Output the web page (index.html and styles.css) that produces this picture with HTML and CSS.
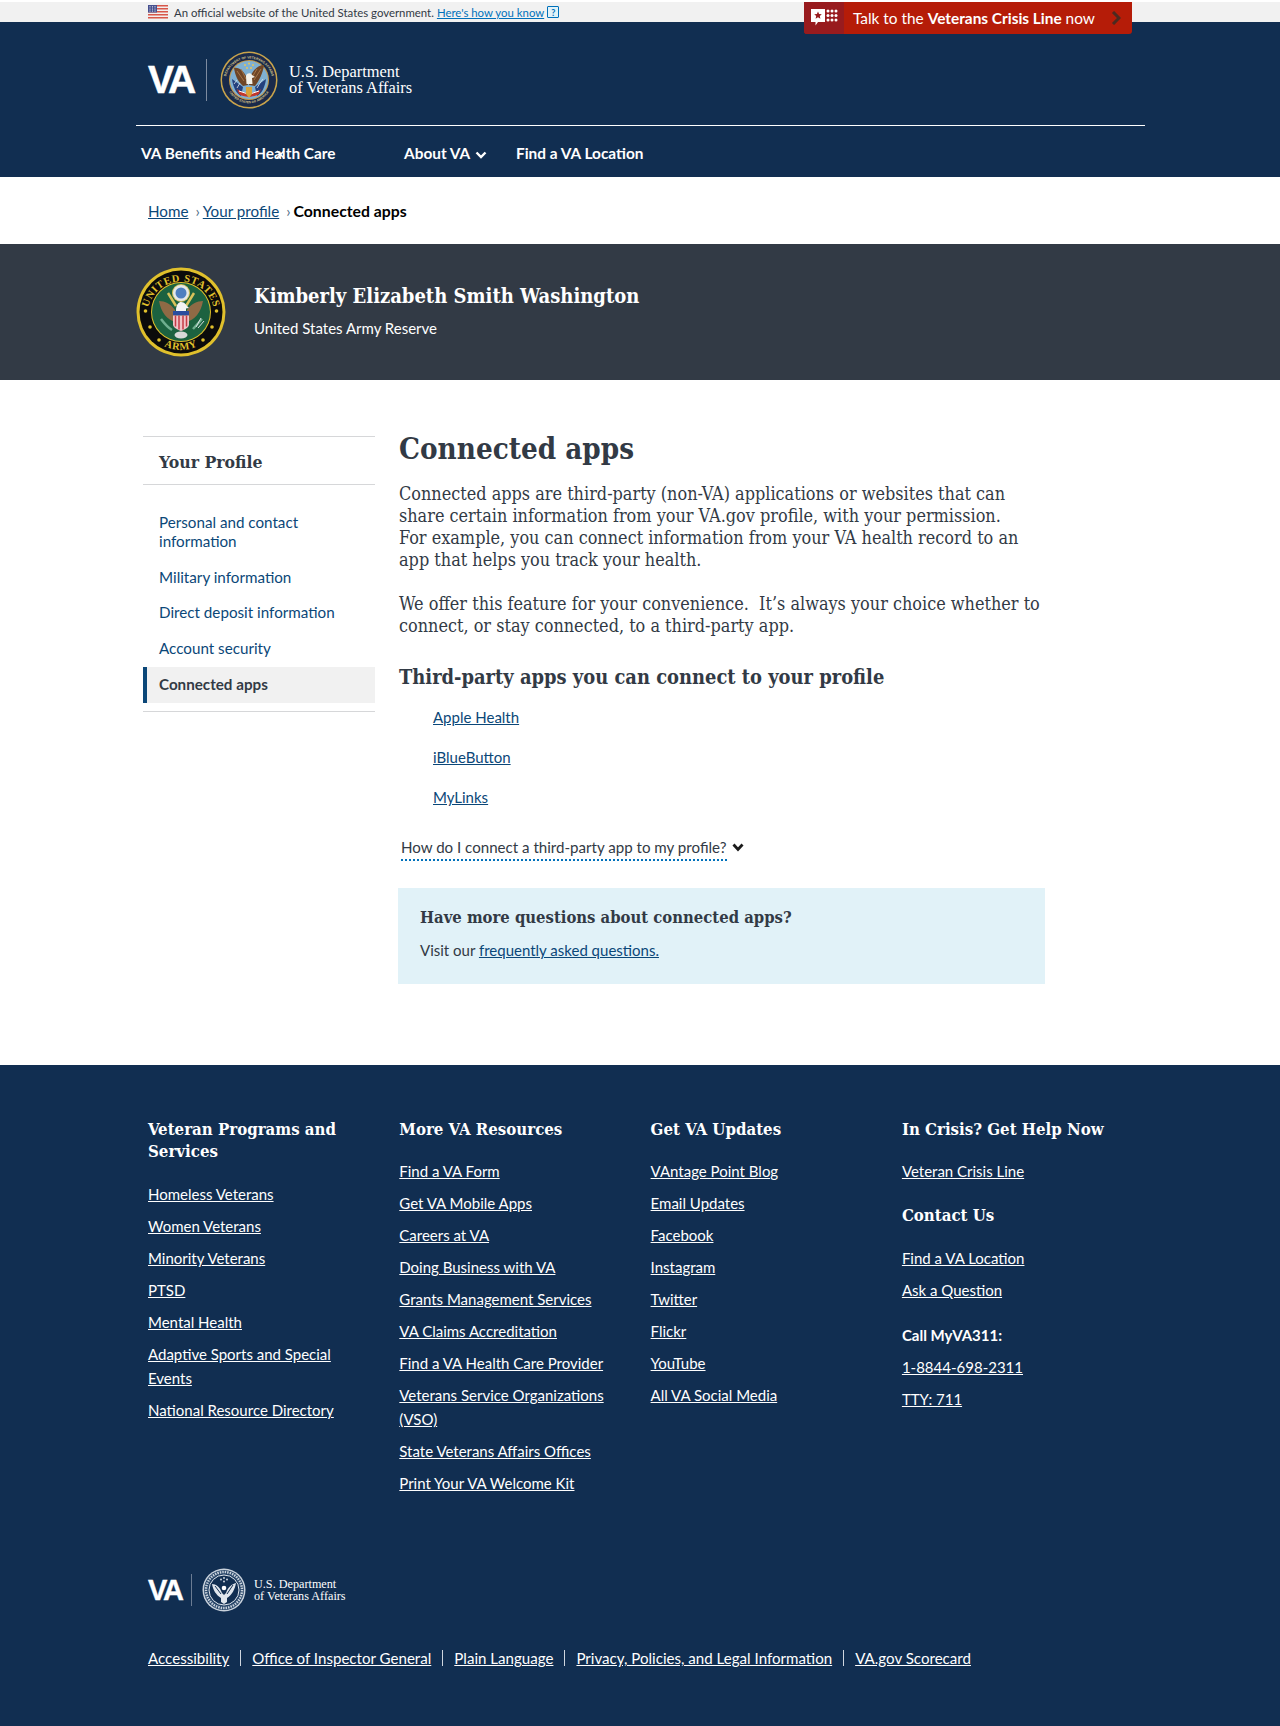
FILE: index.html
```html
<!DOCTYPE html>
<html lang="en">
<head>
<meta charset="utf-8">
<title>Connected apps | Veterans Affairs</title>
<link rel="stylesheet" href="styles.css">
</head>
<body>
<div class="official">
  <div class="official-inner">
    <svg class="flag" width="20" height="14" viewBox="0 0 20 14"><rect width="20" height="14" fill="#f3eeee"/><g fill="#d8574a"><rect y="0" width="20" height="1.5"/><rect y="3" width="20" height="1.5"/><rect y="6" width="20" height="1.5"/><rect y="9" width="20" height="1.5"/><rect y="12" width="20" height="1.5"/></g><rect width="9" height="7.5" fill="#46508f"/><g fill="#fff"><circle cx="2" cy="1.8" r=".6"/><circle cx="4.5" cy="1.8" r=".6"/><circle cx="7" cy="1.8" r=".6"/><circle cx="2" cy="4" r=".6"/><circle cx="4.5" cy="4" r=".6"/><circle cx="7" cy="4" r=".6"/><circle cx="2" cy="6" r=".6"/><circle cx="4.5" cy="6" r=".6"/><circle cx="7" cy="6" r=".6"/></g></svg>
    <span class="official-text">An official website of the United States government.</span>
    <a class="official-link" href="#">Here's how you know</a>
    <span class="q-box">?</span>
  </div>
</div>

<a class="crisis" href="#">
  <span class="crisis-icon">
    <svg width="28" height="20" viewBox="0 0 28 20"><path d="M1 1h14v13H8l-2.500 3.500V14H1z" fill="#fff"/><path d="M8 3.500l1.100 2.500 2.700.2-2 1.800.6 2.700L8 9.300l-2.400 1.400.6-2.700-2-1.800 2.700-.2z" fill="#981b1e"/><g fill="#fff"><circle cx="18" cy="3" r="1.500"/><circle cx="22" cy="3" r="1.500"/><circle cx="26" cy="3" r="1.500"/><circle cx="18" cy="7.500" r="1.500"/><circle cx="22" cy="7.500" r="1.500"/><circle cx="26" cy="7.500" r="1.500"/><circle cx="18" cy="12" r="1.500"/><circle cx="22" cy="12" r="1.500"/><circle cx="26" cy="12" r="1.500"/></g></svg>
  </span>
  <span class="crisis-text">Talk to the <b>Veterans Crisis Line</b> now</span>
  <svg class="crisis-arrow" width="10" height="14" viewBox="0 0 10 14"><path d="M2 1l6 6-6 6" fill="none" stroke="#4b2a20" stroke-width="3"/></svg>
</a>

<header class="site-header">
  <div class="wrap">
    <div class="brand">
      <span class="va-mark">VA</span>
      <span class="brand-rule"></span>
      <svg class="seal" width="58" height="58" viewBox="0 0 58 58">
        <circle cx="29" cy="29" r="28.500" fill="#c9a44c"/>
        <circle cx="29" cy="29" r="27" fill="#1a2a4a"/>
        <circle cx="29" cy="29" r="20" fill="#c69a4a"/>
        <circle cx="29" cy="29" r="19" fill="#7fb0d2"/>
        <defs>
          <path id="vaTop" d="M5.500 31a23.500 23.500 0 0 1 47 0"/>
          <path id="vaBot" d="M7 36a23 23 0 0 0 44 0"/>
        </defs>
        <g class="seal-tiny" fill="#d8c48a">
          <text><textPath href="#vaTop" startOffset="50%" text-anchor="middle">DEPARTMENT OF VETERANS AFFAIRS</textPath></text>
          <text><textPath href="#vaBot" startOffset="50%" text-anchor="middle">UNITED STATES OF AMERICA</textPath></text>
        </g>
        <path d="M12 28l11 8-2 9c-5-3-8-9-9-17zM46 28l-11 8 2 9c5-3 8-9 9-17z" fill="#24407c"/>
        <path d="M14 33l3-4M17 37l3-5M40 32l3-4M37 37l3-5" stroke="#dfe6ee" stroke-width=".8"/>
        <path d="M14 17c5-1 10 3 13 10l1 7-5 1C18 31 15 24 14 17zM44 14c-5 0-11 4-14 13l-1 7 6 1c4-5 8-13 9-21z" fill="#6e4526"/>
        <path d="M17 20l7 10M21 18l5 10M41 18l-7 11M37 18l-6 10" stroke="#a97b4c" stroke-width=".9"/>
        <path d="M26 25c0-3 5-4 6-1l3 2-3 1 .5 6h-6z" fill="#f4f1e8"/>
        <path d="M17 38c5 3 8 4 12 4s8-1 12-4l-2 5c-3 2-6 2-10 3-4-1-8-1-10-3z" fill="#c2382d"/>
        <path d="M19 40l9 3M39 40l-9 3" stroke="#fff" stroke-width="1"/>
        <path d="M26 36h6v7l-3 4-3-4z" fill="#d8a33a"/>
        <g fill="#e6c45a"><circle cx="25" cy="14" r="1"/><circle cx="29" cy="12.500" r="1"/><circle cx="33" cy="14" r="1"/><circle cx="27" cy="17" r="1"/><circle cx="31" cy="17" r="1"/></g>
      </svg>
      <span class="brand-name">U.S. Department<br>of Veterans Affairs</span>
    </div>
    <nav class="main-nav">
      <a href="#" class="nav-benefits">VA Benefits and Health Care</a>
      <a href="#" class="nav-about">About VA
        <svg width="12" height="8" viewBox="0 0 12 8"><path d="M1.500 1.500L6 6l4.500-4.500" fill="none" stroke="#fff" stroke-width="2.400"/></svg>
      </a>
      <a href="#" class="nav-find">Find a VA Location</a>
      <svg class="nav-cursor" width="9" height="9" viewBox="0 0 9 9"><path d="M1 1l7 7M8 1L1 8" stroke="#fff" stroke-width="1.600"/></svg>
    </nav>
  </div>
</header>

<div class="crumbs">
  <a href="#">Home</a><span class="sep">›</span><a href="#">Your profile</a><span class="sep">›</span><b>Connected apps</b>
</div>

<section class="hero">
  <svg class="army" width="90" height="90" viewBox="0 0 90 90">
    <circle cx="45" cy="45" r="44.500" fill="#e0c02c"/>
    <circle cx="45" cy="45" r="41.500" fill="#0b0b0b"/>
    <circle cx="45" cy="45" r="30" fill="#e0c02c"/>
    <circle cx="45" cy="45" r="29" fill="#1c6240"/>
    <defs>
      <path id="armyTop" d="M11.500 48a33.500 33.500 0 0 1 67 0"/>
      <path id="armyBot" d="M12 63.800a38 38 0 0 0 66 0"/>
    </defs>
    <g class="army-letters" fill="#e0c02c">
      <text><textPath href="#armyTop" startOffset="50%" text-anchor="middle">UNITED STATES</textPath></text>
      <text><textPath href="#armyBot" startOffset="50%" text-anchor="middle">ARMY</textPath></text>
    </g>
    <path d="M23 34c6 0 12 3 16 9l1 12c-9-2-15-10-17-21zM67 34c-6 0-12 3-16 9l-1 12c9-2 15-10 17-21z" fill="#8f6a45"/>
    <path d="M32 26l8 13M58 26l-8 13" stroke="#d8c25a" stroke-width="2.500"/>
    <circle cx="45" cy="26" r="9" fill="#d8c25a"/>
    <circle cx="45" cy="26" r="8" fill="#e4e8ea"/>
    <circle cx="45" cy="26" r="5.500" fill="#4f7fc0"/>
    <path d="M40 44c0-7 3-9 5-9 4 0 5 3 6 4l2 2-3 .500v3z" fill="#f4f4f4"/>
    <rect x="37" y="44" width="16" height="4.500" fill="#2b4d9e"/>
    <path d="M37 48.500h16v9c0 3-4 5-8 6.500-4-1.500-8-3.500-8-6.500z" fill="#f0c4c8"/>
    <g stroke="#c53b46" stroke-width="1.500"><path d="M39.500 48.500v11M43 48.500v14M47 48.500v14M50.500 48.500v11"/></g>
    <ellipse cx="45" cy="68" rx="6.500" ry="3.500" fill="#d9d9d9"/>
    <path d="M25 52c3 4 6 8 11 11M57 62l9-10" stroke="#6fae8f" stroke-width="2.500" fill="none"/>
    <path d="M60 60l5-9M62 61l6-7" stroke="#d6dde0" stroke-width="1"/>
    <g fill="#e0c02c"><circle cx="9.500" cy="44" r="1.800"/><circle cx="80.500" cy="44" r="1.800"/><circle cx="14" cy="60" r="1.800"/><circle cx="76" cy="60" r="1.800"/><circle cx="23" cy="73" r="1.800"/><circle cx="67" cy="73" r="1.800"/></g>
  </svg>
  <div class="hero-text">
    <h1 class="hero-name">Kimberly Elizabeth Smith Washington</h1>
    <p class="hero-branch">United States Army Reserve</p>
  </div>
</section>

<main class="page">
  <aside class="side">
    <h2 class="side-title">Your Profile</h2>
    <ul class="side-list">
      <li><a href="#">Personal and contact information</a></li>
      <li><a href="#">Military information</a></li>
      <li><a href="#">Direct deposit information</a></li>
      <li><a href="#">Account security</a></li>
      <li class="active"><a href="#">Connected apps</a></li>
    </ul>
  </aside>
  <article class="content">
    <h1 class="page-title">Connected apps</h1>
    <p class="lead lead-narrow">Connected apps are third-party (non-VA) applications or websites that can share certain information from your VA.gov profile, with your permission. For example, you can connect information from your VA health record to an app that helps you track your health.</p>
    <p class="lead">We offer this feature for your convenience.&nbsp; It’s always your choice whether to connect, or stay connected, to a third-party app.</p>
    <h2 class="sub-title">Third-party apps you can connect to your profile</h2>
    <ul class="app-list">
      <li><a href="#">Apple Health</a></li>
      <li><a href="#">iBlueButton</a></li>
      <li><a href="#">MyLinks</a></li>
    </ul>
    <div class="howto">
      <span class="howto-text">How do I connect a third-party app to my profile?</span>
      <svg width="12" height="9" viewBox="0 0 12 9"><path d="M1.500 1.500L6 6.500l4.500-5" fill="none" stroke="#1b1b1b" stroke-width="2.800"/></svg>
    </div>
    <div class="faq">
      <h3 class="faq-title">Have more questions about connected apps?</h3>
      <p class="faq-text">Visit our <a href="#">frequently asked questions.</a></p>
    </div>
  </article>
</main>

<footer class="footer">
  <div class="foot-cols">
    <div class="foot-col">
      <h3>Veteran Programs and Services</h3>
      <ul>
        <li><a href="#">Homeless Veterans</a></li>
        <li><a href="#">Women Veterans</a></li>
        <li><a href="#">Minority Veterans</a></li>
        <li><a href="#">PTSD</a></li>
        <li><a href="#">Mental Health</a></li>
        <li><a href="#">Adaptive Sports and Special Events</a></li>
        <li><a href="#">National Resource Directory</a></li>
      </ul>
    </div>
    <div class="foot-col">
      <h3>More VA Resources</h3>
      <ul>
        <li><a href="#">Find a VA Form</a></li>
        <li><a href="#">Get VA Mobile Apps</a></li>
        <li><a href="#">Careers at VA</a></li>
        <li><a href="#">Doing Business with VA</a></li>
        <li><a href="#">Grants Management Services</a></li>
        <li><a href="#">VA Claims Accreditation</a></li>
        <li><a href="#">Find a VA Health Care Provider</a></li>
        <li><a href="#">Veterans Service Organizations (VSO)</a></li>
        <li><a href="#">State Veterans Affairs Offices</a></li>
        <li><a href="#">Print Your VA Welcome Kit</a></li>
      </ul>
    </div>
    <div class="foot-col">
      <h3>Get VA Updates</h3>
      <ul>
        <li><a href="#">VAntage Point Blog</a></li>
        <li><a href="#">Email Updates</a></li>
        <li><a href="#">Facebook</a></li>
        <li><a href="#">Instagram</a></li>
        <li><a href="#">Twitter</a></li>
        <li><a href="#">Flickr</a></li>
        <li><a href="#">YouTube</a></li>
        <li><a href="#">All VA Social Media</a></li>
      </ul>
    </div>
    <div class="foot-col">
      <h3>In Crisis? Get Help Now</h3>
      <ul>
        <li><a href="#">Veteran Crisis Line</a></li>
      </ul>
      <h3 class="contact-head">Contact Us</h3>
      <ul>
        <li><a href="#">Find a VA Location</a></li>
        <li><a href="#">Ask a Question</a></li>
      </ul>
      <p class="call-head">Call MyVA311:</p>
      <ul>
        <li><a href="#">1-8844-698-2311</a></li>
        <li><a href="#">TTY: 711</a></li>
      </ul>
    </div>
  </div>
  <div class="foot-brand">
    <span class="va-mark small">VA</span>
    <span class="brand-rule small"></span>
    <svg class="seal-small" width="44" height="44" viewBox="0 0 44 44">
      <circle cx="22" cy="22" r="21.500" fill="#c9d2dc"/>
      <circle cx="22" cy="22" r="20" fill="#274568"/>
      <circle cx="22" cy="22" r="15" fill="#112e51" stroke="#dfe5ec" stroke-width="1"/>
      <circle cx="22" cy="22" r="18" fill="none" stroke="#c9d2dc" stroke-width="2.500" stroke-dasharray="1.500 1"/>
      <path d="M10 16c4 0 8 3 10 9l2 2 2-2c2-6 6-9 10-10-1 6-4 12-9 15v4l-3 2-3-2v-4c-5-3-8-8-9-14z" fill="#dfe5ec"/>
      <path d="M13 18l6 8M16 16l5 8M31 17l-6 9M28 15l-5 9" stroke="#112e51" stroke-width="1"/>
      <circle cx="22" cy="20" r="2.300" fill="#fff"/>
      <g fill="#dfe5ec"><circle cx="19" cy="11.500" r=".9"/><circle cx="22" cy="10" r=".9"/><circle cx="25" cy="11.500" r=".9"/><circle cx="22" cy="13.500" r=".9"/></g>
    </svg>
    <span class="brand-name small">U.S. Department<br>of Veterans Affairs</span>
  </div>
  <nav class="foot-links">
    <a href="#">Accessibility</a><span class="pipe"></span><a href="#">Office of Inspector General</a><span class="pipe"></span><a href="#">Plain Language</a><span class="pipe"></span><a href="#">Privacy, Policies, and Legal Information</a><span class="pipe"></span><a href="#">VA.gov Scorecard</a>
  </nav>
</footer>
</body>
</html>
```
FILE: styles.css
```css
* { box-sizing: border-box; }
html, body { margin: 0; padding: 0; }
body {
  position: relative;
  padding-top: 2px;
  background: #fff;
  color: #323a45;
  font-family: "Lato", "Liberation Sans", sans-serif;
  font-size: 16px;
}
h1, h2, h3, p, ul { margin: 0; padding: 0; }
ul { list-style: none; }

/* government strip */
.official { height: 20px; background: #f1f1f1; }
.official-inner { display: flex; align-items: center; height: 20px; padding-left: 148px; font-size: 11.400px; }
.flag { margin-right: 6px; }
.official-text { color: #323a45; margin-right: 3px; }
.official-link { color: #0071bb; }
.q-box { display: inline-flex; align-items: center; justify-content: center; width: 12px; height: 12px; margin-left: 3px; border: 1px solid #0071bb; border-radius: 1px; background: #e1f2f8; color: #0071bb; font-size: 9px; font-weight: 700; }

/* crisis */
.crisis { position: absolute; left: 804px; top: 2px; display: flex; align-items: center; width: 328px; height: 32px; background: #b51c08; border-radius: 0 0 3px 3px; color: #fff; text-decoration: none; }
.crisis-icon { display: flex; align-items: center; justify-content: center; width: 40px; height: 32px; background: #981b1e; flex: none; border-radius: 0 0 0 3px; }
.crisis-text { margin-left: 9px; font-size: 15.400px; white-space: nowrap; flex: 1; }
.crisis-arrow { margin-right: 11px; }

/* header */
.site-header { background: #112e51; height: 155px; }
.wrap { width: 1009px; margin-left: 136px; }
.brand { display: flex; align-items: center; height: 104px; padding: 12px 0 0 12px; border-bottom: 1px solid #fff; color: #fff; }
.va-mark { font-family: "Liberation Sans", sans-serif; font-weight: 700; font-size: 39px; letter-spacing: -3px; line-height: 1; width: 58px; color: #fff; flex: none; -webkit-text-stroke: .5px #fff; }
.brand-rule { width: 1px; height: 42px; margin: 0 13px 0 0; background: #7d8ba0; flex: none; }
.seal { flex: none; }
.seal-tiny { font-family: "Liberation Sans", sans-serif; font-size: 3.300px; font-weight: 700; }
.brand-name { margin-left: 11px; font-family: "Liberation Serif", serif; font-size: 16.400px; line-height: 16px; color: #fff; white-space: nowrap; }
.main-nav { position: relative; display: flex; align-items: center; height: 50px; padding: 3px 0 0 5px; }
.main-nav a { color: #fff; font-weight: 700; font-size: 15.400px; text-decoration: none; white-space: nowrap; }
.nav-benefits { width: 263px; }
.nav-about { width: 112px; }
.nav-about svg { margin-left: 1px; }
.nav-cursor { position: absolute; left: 140px; top: 24px; }

/* breadcrumb */
.crumbs { height: 67px; padding: 24px 0 0 148px; font-size: 15.200px; line-height: 20px; color: #000; }
.crumbs a { color: #0b4778; }
.crumbs b { font-size: 15.800px; }
.sep { margin: 0 3px 0 7px; color: #4f6b86; }

/* hero */
.hero { display: flex; align-items: center; height: 136px; padding-left: 136px; background: #323a45; color: #fff; }
.army { flex: none; }
.army-letters { font-family: "Liberation Serif", serif; font-size: 10.500px; font-weight: 700; letter-spacing: .6px; }
.hero-text { margin: -4px 0 0 28px; }
.hero-name { font-family: "DejaVu Serif Condensed", "DejaVu Serif", serif; font-weight: 700; font-size: 20px; line-height: 28px; }
.hero-branch { margin-top: 7px; font-size: 15px; line-height: 22px; }

/* main */
.page { display: flex; height: 685px; padding: 56px 0 0 143px; }
.side { width: 232px; flex: none; }
.side-title { height: 49px; border-top: 1px solid #d6d7d9; border-bottom: 1px solid #d6d7d9; padding-left: 16px; font-family: "DejaVu Serif Condensed", "DejaVu Serif", serif; font-size: 17.500px; font-weight: 700; line-height: 50px; color: #323a45; }
.side-list { margin-top: 20px; border-bottom: 1px solid #d6d7d9; padding-bottom: 8px; }
.side-list li { padding: 8px 16px 8.700px; line-height: 19px; font-size: 15.200px; }
.side-list a { color: #0b4778; text-decoration: none; }
.side-list .active { background: #f1f1f1; border-left: 4px solid #0b4778; padding: 8px 12px; height: 36px; }
.side-list .active a { color: #323a45; font-weight: 700; }
.content { width: 648px; margin-left: 24px; flex: none; }
.page-title { margin-top: -7px; font-family: "DejaVu Serif Condensed", "DejaVu Serif", serif; font-size: 29.300px; line-height: 40px; font-weight: 700; color: #323a45; }
.lead { font-family: "DejaVu Serif Condensed", "DejaVu Serif", serif; font-size: 17.900px; line-height: 22px; color: #323a45; margin-bottom: 22px; }
.lead-narrow { max-width: 630px; }
.page-title + .lead { margin-top: 14px; }
.sub-title { margin-top: 27px; font-family: "DejaVu Serif Condensed", "DejaVu Serif", serif; font-size: 19.900px; line-height: 26px; font-weight: 700; color: #323a45; }
.app-list { margin-top: 15px; padding-left: 34px; }
.app-list li { height: 40px; line-height: 24px; font-size: 15px; }
.app-list a, .faq-text a, .crumbs a { text-decoration: underline; }
.app-list a, .faq-text a { color: #0b4778; }
.howto { display: flex; align-items: center; margin: 10px 0 0 2px; height: 24px; font-size: 15.100px; color: #323a45; }
.howto-text { display: block; height: 26px; line-height: 24px; margin-top: 2px; width: 326px; border-bottom: 2px dotted #0071bb; white-space: nowrap; }
.howto svg { margin-left: 5px; }
.faq { width: 647px; height: 96px; margin-top: 29px; margin-left: -1px; padding: 18px 22px; background: #e1f2f8; }
.faq-title { font-family: "DejaVu Serif Condensed", "DejaVu Serif", serif; font-size: 16.500px; line-height: 24px; font-weight: 700; color: #323a45; }
.faq-text { margin-top: 9px; font-size: 15px; line-height: 22px; color: #323a45; }

/* footer */
.footer { height: 661px; background: #112e51; color: #fff; padding: 53px 0 0 148px; }
.foot-cols { display: grid; grid-template-columns: repeat(4, 251.300px); height: 450px; }
.foot-col { padding-right: 25px; }
.foot-col h3 { font-family: "DejaVu Serif Condensed", "DejaVu Serif", serif; font-size: 16.700px; line-height: 22px; font-weight: 700; margin-bottom: 19px; }
.foot-col:first-child h3 { margin-bottom: 20px; }
.foot-col li { line-height: 24px; font-size: 15px; padding: 0 0 8px; }
.foot-col a { color: #fff; }
.foot-col .contact-head { margin: 13px 0 19.500px; }
.call-head { font-size: 15px; font-weight: 700; line-height: 24px; margin: 13px 0 8px; }
.foot-brand { display: flex; align-items: center; height: 44px; color: #fff; }
.va-mark.small { font-size: 29px; letter-spacing: -2.200px; width: 43px; -webkit-text-stroke: .4px #fff; }
.brand-rule.small { height: 32px; margin: 0 10px 0 0; background: #6b7c93; }
.seal-small { flex: none; }
.brand-name.small { margin-left: 8px; font-size: 12.200px; line-height: 12px; }
.foot-links { display: flex; align-items: center; margin-top: 34px; height: 24px; font-size: 15.100px; white-space: nowrap; }
.foot-links a { color: #fff; }
.pipe { width: 1px; height: 16px; margin: 0 11px; background: #cfd6df; }
```
